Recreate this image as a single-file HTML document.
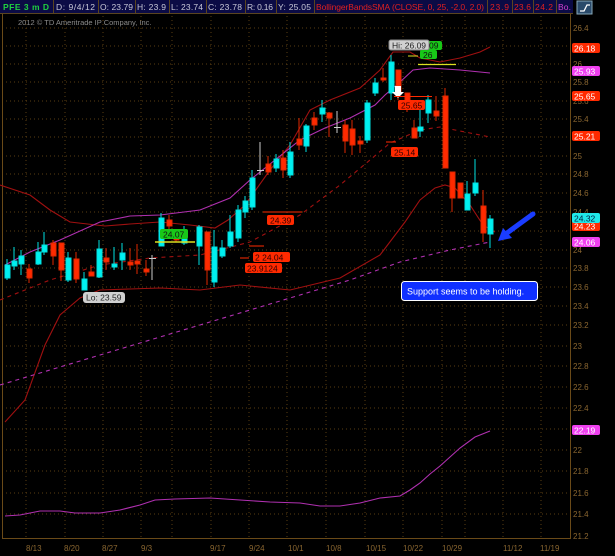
<!DOCTYPE html>
<html><head><meta charset="utf-8"><style>
html,body{margin:0;padding:0;background:#000;}
body{width:615px;height:556px;overflow:hidden;font-family:"Liberation Sans",sans-serif;}
</style></head><body>
<svg width="615" height="556" xmlns="http://www.w3.org/2000/svg" style="display:block">
<rect width="615" height="556" fill="#000"/>
<!-- top bar -->
<rect x="0" y="0" width="573" height="13" fill="#0b0b45"/>
<g stroke="#5a4420" stroke-width="1">
<line x1="53.5" y1="0" x2="53.5" y2="13"/><line x1="98.5" y1="0" x2="98.5" y2="13"/><line x1="135.5" y1="0" x2="135.5" y2="13"/>
<line x1="169.5" y1="0" x2="169.5" y2="13"/><line x1="206.5" y1="0" x2="206.5" y2="13"/><line x1="245.5" y1="0" x2="245.5" y2="13"/>
<line x1="276.5" y1="0" x2="276.5" y2="13"/><line x1="314.5" y1="0" x2="314.5" y2="13"/><line x1="487.5" y1="0" x2="487.5" y2="13"/>
<line x1="512.5" y1="0" x2="512.5" y2="13"/><line x1="533.5" y1="0" x2="533.5" y2="13"/><line x1="556.5" y1="0" x2="556.5" y2="13"/>
<line x1="0" y1="13.5" x2="573" y2="13.5"/>
</g>
<g font-size="8.5" fill="#c8c8d8">
<text x="3" y="10" fill="#1fd03f" font-weight="bold" textLength="46">PFE 3 m D</text>
<text x="56" y="10" textLength="39">D: 9/4/12</text><text x="100" y="10" textLength="33">O: 23.79</text><text x="137" y="10" textLength="29">H: 23.9</text>
<text x="171" y="10" textLength="32">L: 23.74</text><text x="208" y="10" textLength="34">C: 23.78</text><text x="247" y="10" textLength="26">R: 0.16</text>
<text x="278" y="10" textLength="33">Y: 25.05</text>
<text x="316" y="10" fill="#e02020" textLength="168">BollingerBandsSMA (CLOSE, 0, 25, -2.0, 2.0)</text>
<text x="490" y="10" fill="#e02020" textLength="19">23.9</text><text x="514" y="10" fill="#e02020" textLength="17">23.6</text><text x="535" y="10" fill="#e02020" textLength="18">24.2</text>
<text x="558" y="10" fill="#d040d0" textLength="13">Bo.</text>
</g>
<rect x="577" y="1" width="15" height="13" fill="#2a4a6a" stroke="#8ab" stroke-width="1"/>
<path d="M580 11 L584 11 L587 5 L590 5" stroke="#fff" fill="none" stroke-width="1.3"/>
<text x="18" y="25" font-size="7.5" fill="#8a8a8a">2012 © TD Ameritrade IP Company, Inc.</text>
<!-- grid -->
<g stroke="#5a3e12" stroke-dasharray="1,3" stroke-width="1">
<line x1="2" y1="28" x2="568" y2="28"/><line x1="2" y1="46" x2="568" y2="46"/><line x1="2" y1="64" x2="568" y2="64"/>
<line x1="2" y1="82" x2="568" y2="82"/><line x1="2" y1="101" x2="568" y2="101"/><line x1="2" y1="119" x2="568" y2="119"/>
<line x1="2" y1="137" x2="568" y2="137"/><line x1="2" y1="156" x2="568" y2="156"/><line x1="2" y1="174" x2="568" y2="174"/>
<line x1="2" y1="193" x2="568" y2="193"/><line x1="2" y1="212" x2="568" y2="212"/><line x1="2" y1="231" x2="568" y2="231"/>
<line x1="2" y1="250" x2="568" y2="250"/><line x1="2" y1="268" x2="568" y2="268"/><line x1="2" y1="287" x2="568" y2="287"/>
<line x1="2" y1="306" x2="568" y2="306"/><line x1="2" y1="325" x2="568" y2="325"/><line x1="2" y1="346" x2="568" y2="346"/>
<line x1="2" y1="366" x2="568" y2="366"/><line x1="2" y1="387" x2="568" y2="387"/><line x1="2" y1="408" x2="568" y2="408"/>
<line x1="2" y1="429" x2="568" y2="429"/><line x1="2" y1="450" x2="568" y2="450"/><line x1="2" y1="471" x2="568" y2="471"/>
<line x1="2" y1="493" x2="568" y2="493"/><line x1="2" y1="514" x2="568" y2="514"/>
<line x1="26" y1="16" x2="26" y2="538"/><line x1="65" y1="16" x2="65" y2="538"/><line x1="103" y1="16" x2="103" y2="538"/>
<line x1="141" y1="16" x2="141" y2="538"/><line x1="172" y1="16" x2="172" y2="538"/><line x1="211" y1="16" x2="211" y2="538"/>
<line x1="249" y1="16" x2="249" y2="538"/><line x1="287" y1="16" x2="287" y2="538"/><line x1="326" y1="16" x2="326" y2="538"/>
<line x1="365" y1="16" x2="365" y2="538"/><line x1="403" y1="16" x2="403" y2="538"/><line x1="442" y1="16" x2="442" y2="538"/>
<line x1="465" y1="16" x2="465" y2="538"/><line x1="503" y1="16" x2="503" y2="538"/><line x1="541" y1="16" x2="541" y2="538"/>
</g>
<g stroke="#6a4a18" stroke-width="1"><line x1="2.5" y1="14" x2="2.5" y2="538"/><line x1="570.5" y1="14" x2="570.5" y2="538"/><line x1="2" y1="538.5" x2="571" y2="538.5"/></g>
<g font-size="8" fill="#8a6630">
<text x="573" y="31">26.4</text><text x="573" y="67">26</text><text x="573" y="85">25.8</text><text x="573" y="104">25.6</text>
<text x="573" y="122">25.4</text><text x="573" y="159">25</text><text x="573" y="177">24.8</text><text x="573" y="196">24.6</text>
<text x="573" y="215">24.4</text><text x="573" y="253">24</text><text x="573" y="271">23.8</text><text x="573" y="290">23.6</text>
<text x="573" y="309">23.4</text><text x="573" y="328">23.2</text><text x="573" y="349">23</text><text x="573" y="369">22.8</text>
<text x="573" y="390">22.6</text><text x="573" y="411">22.4</text><text x="573" y="453">22</text><text x="573" y="474">21.8</text>
<text x="573" y="496">21.6</text><text x="573" y="517">21.4</text><text x="573" y="539">21.2</text>
<text x="26" y="551">8/13</text><text x="64" y="551">8/20</text><text x="102" y="551">8/27</text><text x="141" y="551">9/3</text>
<text x="210" y="551">9/17</text><text x="249" y="551">9/24</text><text x="288" y="551">10/1</text><text x="326" y="551">10/8</text>
<text x="366" y="551">10/15</text><text x="403" y="551">10/22</text><text x="442" y="551">10/29</text><text x="503" y="551">11/12</text><text x="540" y="551">11/19</text>
</g>
<!-- lines -->
<g fill="none" stroke-width="1.1">
<path d="M0 185 L30 195 L50 210 L70 222 L105 226 L130 224 L160 222 L190 225 L215 228 L228 220 L245 205 L270 170 L290 145 L310 110 L330 100 L360 88 L380 70 L393 52 L410 52 L420 58 L440 62 L460 58 L480 52 L490 47" stroke="#a01010"/>
<path d="M5 422 L25 400 L45 345 L60 315 L80 298 L100 290 L130 289 L160 288 L200 290 L240 285 L290 290 L340 278 L380 255 L405 222 L420 200 L435 188 L445 185 L455 188 L470 205 L483 225 L495 232" stroke="#a01010"/>
<path d="M0 300 L50 280 L100 265 L150 258 L200 255 L250 242 L300 215 L340 185 L370 160 L390 143 L420 130 L440 127 L470 133 L490 137" stroke="#a01010" stroke-dasharray="4,4"/>
<path d="M5 265 L30 252 L60 240 L100 222 L130 216 L160 215 L200 210 L230 198 L250 180 L275 160 L300 140 L325 128 L350 118 L375 105 L385 95 L400 82 L413 70 L430 68 L460 70 L490 73" stroke="#b030b0"/>
<path d="M0 385 L50 370 L100 355 L150 340 L200 325 L250 310 L300 295 L350 280 L400 262 L450 250 L490 242" stroke="#b030b0" stroke-dasharray="4,4"/>
<path d="M5 516 L20 515 L40 511 L60 511 L75 513 L100 513 L120 510 L140 505 L155 500 L175 499 L210 498 L240 500 L270 502 L300 503 L320 506 L340 506 L360 503 L380 498 L400 496 L410 490 L420 483 L430 474 L440 466 L450 457 L460 448 L475 437 L490 431" stroke="#b030b0"/>
</g>
<!-- candles -->
<g stroke-width="1">
<g stroke="#00e0e0" fill="#00f0f0">
<line x1="7" y1="259" x2="7" y2="280"/><rect x="5" y="265" width="5" height="13"/>
<line x1="14" y1="247" x2="14" y2="270"/><rect x="12" y="261" width="5" height="5"/>
<line x1="21" y1="250" x2="21" y2="275"/><rect x="19" y="256" width="5" height="8"/>
<line x1="38" y1="242" x2="38" y2="265"/><rect x="36" y="252" width="5" height="12"/>
<line x1="44" y1="232" x2="44" y2="255"/><rect x="42" y="245" width="5" height="7"/>
<line x1="68" y1="252" x2="68" y2="282"/><rect x="66" y="258" width="5" height="22"/>
<line x1="84" y1="272" x2="84" y2="290"/><rect x="82" y="279" width="5" height="11"/>
<line x1="99" y1="240" x2="99" y2="278"/><rect x="97" y="249" width="5" height="28"/>
<line x1="114" y1="247" x2="114" y2="270"/><rect x="112" y="264" width="5" height="3"/>
<line x1="122" y1="243" x2="122" y2="270"/><rect x="120" y="253" width="5" height="7"/>
<line x1="161" y1="213" x2="161" y2="246"/><rect x="159" y="218" width="5" height="28"/>
<line x1="184" y1="226" x2="184" y2="245"/><rect x="182" y="237" width="5" height="6"/>
<line x1="199" y1="225" x2="199" y2="265"/><rect x="197" y="227" width="5" height="19"/>
<line x1="214" y1="230" x2="214" y2="287"/><rect x="212" y="247" width="5" height="35"/>
<line x1="222" y1="240" x2="222" y2="258"/><rect x="220" y="248" width="5" height="8"/>
<line x1="230" y1="215" x2="230" y2="248"/><rect x="228" y="232" width="5" height="14"/>
<line x1="238" y1="205" x2="238" y2="242"/><rect x="236" y="210" width="5" height="28"/>
<line x1="245" y1="196" x2="245" y2="218"/><rect x="243" y="201" width="5" height="11"/>
<line x1="252" y1="170" x2="252" y2="210"/><rect x="250" y="178" width="5" height="29"/>
<line x1="276" y1="154" x2="276" y2="172"/><rect x="274" y="159" width="5" height="9"/>
<line x1="290" y1="142" x2="290" y2="178"/><rect x="288" y="152" width="5" height="23"/>
<line x1="306" y1="124" x2="306" y2="152"/><rect x="304" y="126" width="5" height="20"/>
<line x1="322" y1="100" x2="322" y2="122"/><rect x="320" y="108" width="5" height="6"/>
<line x1="367" y1="100" x2="367" y2="143"/><rect x="365" y="103" width="5" height="37"/>
<line x1="375" y1="78" x2="375" y2="96"/><rect x="373" y="83" width="5" height="10"/>
<line x1="391" y1="55" x2="391" y2="100"/><rect x="389" y="62" width="5" height="31"/>
<line x1="420" y1="110" x2="420" y2="137"/><rect x="418" y="127" width="5" height="4"/>
<line x1="428" y1="95" x2="428" y2="123"/><rect x="426" y="100" width="5" height="13"/>
<line x1="467" y1="181" x2="467" y2="210"/><rect x="465" y="194" width="5" height="16"/>
<line x1="475" y1="159" x2="475" y2="196"/><rect x="473" y="183" width="5" height="10"/>
<line x1="490" y1="215" x2="490" y2="248"/><rect x="488" y="219" width="5" height="15"/>
</g>
<g stroke="#e02800" fill="#ff2a00">
<line x1="29" y1="264" x2="29" y2="283"/><rect x="27" y="269" width="5" height="9"/>
<line x1="53" y1="240" x2="53" y2="265"/><rect x="51" y="243" width="5" height="13"/>
<line x1="61" y1="243" x2="61" y2="281"/><rect x="59" y="243" width="5" height="27"/>
<line x1="76" y1="252" x2="76" y2="283"/><rect x="74" y="259" width="5" height="20"/>
<line x1="91" y1="265" x2="91" y2="276"/><rect x="89" y="272" width="5" height="4"/>
<line x1="106" y1="248" x2="106" y2="270"/><rect x="104" y="258" width="5" height="4"/>
<line x1="130" y1="248" x2="130" y2="270"/><rect x="128" y="262" width="5" height="3"/>
<line x1="137" y1="244" x2="137" y2="274"/><rect x="135" y="261" width="5" height="3"/>
<line x1="146" y1="260" x2="146" y2="276"/><rect x="144" y="269" width="5" height="3"/>
<line x1="169" y1="215" x2="169" y2="230"/><rect x="167" y="220" width="5" height="6"/>
<line x1="176" y1="230" x2="176" y2="242"/><rect x="174" y="236" width="5" height="4"/>
<line x1="207" y1="232" x2="207" y2="285"/><rect x="205" y="232" width="5" height="38"/>
<line x1="268" y1="156" x2="268" y2="175"/><rect x="266" y="164" width="5" height="8"/>
<line x1="283" y1="150" x2="283" y2="178"/><rect x="281" y="158" width="5" height="12"/>
<line x1="299" y1="118" x2="299" y2="150"/><rect x="297" y="139" width="5" height="6"/>
<line x1="314" y1="112" x2="314" y2="130"/><rect x="312" y="118" width="5" height="7"/>
<line x1="329" y1="112" x2="329" y2="137"/><rect x="327" y="113" width="5" height="5"/>
<line x1="345" y1="120" x2="345" y2="153"/><rect x="343" y="125" width="5" height="16"/>
<line x1="352" y1="120" x2="352" y2="155"/><rect x="350" y="129" width="5" height="16"/>
<line x1="360" y1="136" x2="360" y2="153"/><rect x="358" y="141" width="5" height="3"/>
<line x1="383" y1="68" x2="383" y2="82"/><rect x="381" y="78" width="5" height="2"/>
<line x1="398" y1="70" x2="398" y2="100"/><rect x="396" y="70" width="5" height="23"/>
<line x1="407" y1="93" x2="407" y2="112"/><rect x="405" y="93" width="5" height="9"/>
<line x1="414" y1="120" x2="414" y2="138"/><rect x="412" y="128" width="5" height="10"/>
<line x1="436" y1="96" x2="436" y2="121"/><rect x="434" y="111" width="5" height="5"/>
<line x1="445" y1="88" x2="445" y2="168"/><rect x="443" y="96" width="5" height="72"/>
<line x1="452" y1="172" x2="452" y2="212"/><rect x="450" y="172" width="5" height="26"/>
<line x1="460" y1="183" x2="460" y2="198"/><rect x="458" y="183" width="5" height="15"/>
<line x1="483" y1="190" x2="483" y2="242"/><rect x="481" y="206" width="5" height="27"/>
</g>
<g stroke="#cccccc"><line x1="152" y1="255" x2="152" y2="280"/><line x1="149" y1="258.5" x2="156" y2="258.5"/>
<line x1="260" y1="142" x2="260" y2="175"/><line x1="257" y1="170.5" x2="264" y2="170.5"/>
<line x1="337" y1="111" x2="337" y2="133"/><line x1="334" y1="127.5" x2="341" y2="127.5"/></g>
</g>
<!-- annotations -->
<g font-size="8.5">
<rect x="418" y="41" width="24" height="9" rx="2" fill="#18c818"/>
<rect x="389" y="40" width="40" height="10" rx="2" fill="#d0d0d0" stroke="#888"/>
<text x="392" y="48.5" fill="#222">Hi: 26.09</text><text x="429" y="48.5" fill="#111">09</text>
<rect x="420" y="50" width="17" height="9" rx="2" fill="#18c818"/><text x="423" y="58" fill="#111">26</text>
<line x1="408" y1="56" x2="418" y2="56" stroke="#dde020"/>
<line x1="418" y1="64.5" x2="456" y2="64.5" stroke="#dde020" stroke-width="1.3"/>
<path d="M395 86 L401 86 L401 92 L404 92 L398 98 L392 92 L395 92 Z" fill="#fff"/>
<line x1="394" y1="96.5" x2="432" y2="96.5" stroke="#ff2a00"/>
<rect x="398" y="100" width="27" height="10" rx="2" fill="#ff2a00"/><text x="401" y="108.5" fill="#300">25.65</text>
<line x1="386" y1="142" x2="396" y2="142" stroke="#ff2a00"/>
<rect x="391" y="147" width="27" height="10" rx="2" fill="#ff2a00"/><text x="394" y="155.5" fill="#300">25.14</text>
<line x1="263" y1="212" x2="302" y2="212" stroke="#ff2a00"/>
<rect x="267" y="215" width="27" height="10" rx="2" fill="#ff2a00"/><text x="270" y="223.5" fill="#300">24.39</text>
<rect x="160" y="229" width="28" height="10" rx="2" fill="#18c818"/><text x="163" y="237.5" fill="#111">24.07</text>
<line x1="155" y1="242" x2="195" y2="242" stroke="#dde020" stroke-width="1.5"/>
<line x1="249" y1="246" x2="264" y2="246" stroke="#ff2a00"/>
<rect x="253" y="252" width="37" height="10" rx="2" fill="#ff2a00"/><text x="255" y="260.5" fill="#300">2  24.04</text>
<line x1="240" y1="258" x2="249" y2="258" stroke="#ff2a00"/>
<rect x="245" y="263" width="37" height="10" rx="2" fill="#ff2a00"/><text x="247" y="271.5" fill="#300">23.9124</text>
<rect x="83" y="292" width="42" height="11" rx="3" fill="#d0d0d0"/><text x="86" y="300.5" fill="#222">Lo: 23.59</text>
</g>
<!-- right labels -->
<g font-size="8.5" fill="#fff">
<rect x="572" y="43" width="28" height="10" rx="2" fill="#ff2a00"/><text x="574" y="51.5">26.18</text>
<rect x="572" y="66" width="28" height="10" rx="2" fill="#f040f0"/><text x="574" y="74.5">25.93</text>
<rect x="572" y="91" width="28" height="10" rx="2" fill="#ff2a00"/><text x="574" y="99.5">25.65</text>
<rect x="572" y="131" width="28" height="10" rx="2" fill="#ff2a00"/><text x="574" y="139.5">25.21</text>
<rect x="572" y="221" width="28" height="10" rx="2" fill="#ff2a00"/><text x="574" y="229.5">24.23</text>
<rect x="572" y="213" width="28" height="10" rx="2" fill="#20e8e8"/><text x="574" y="221.5" fill="#024">24.32</text>
<rect x="572" y="237" width="28" height="10" rx="2" fill="#f040f0"/><text x="574" y="245.5">24.06</text>
<rect x="572" y="425" width="28" height="10" rx="2" fill="#f040f0"/><text x="574" y="433.5">22.19</text>
</g>
<!-- callout -->
<rect x="401.5" y="281.5" width="136" height="19" rx="3" fill="#1030ff" stroke="#fff"/>
<text x="407" y="294.5" font-size="9" fill="#fff">Support seems to be holding.</text>
<path d="M533 214 L507 233" stroke="#1a3cff" stroke-width="5" stroke-linecap="round"/>
<path d="M498 241 L503 228 L512 238 Z" fill="#1a3cff"/>
</svg>
</body></html>
